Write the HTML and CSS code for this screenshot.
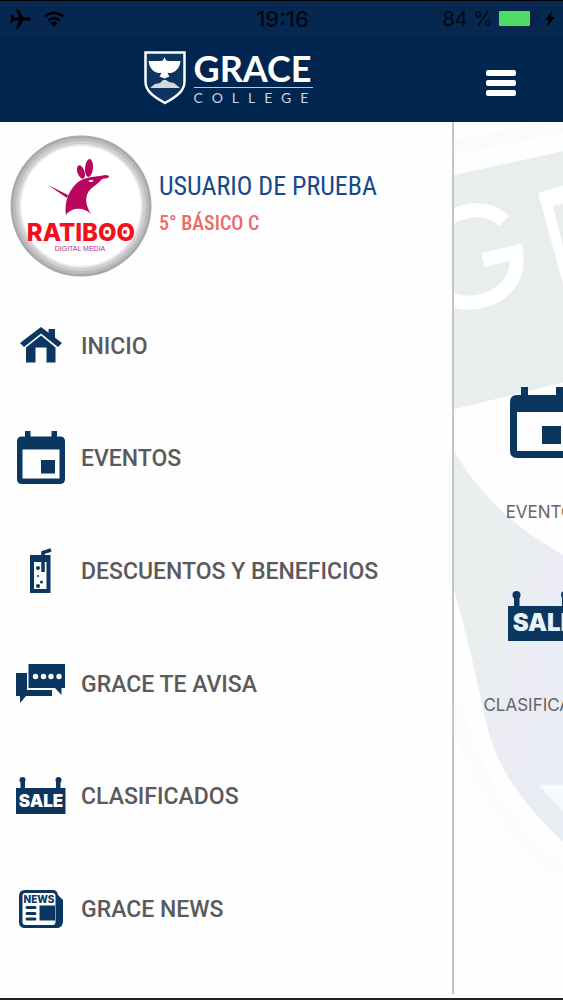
FILE: index.html
```html
<!DOCTYPE html>
<html lang="es">
<head>
    <meta charset="UTF-8">
    <meta name="viewport" content="width=device-width, initial-scale=1.0">
    <title>Grace College</title>
    <link rel="stylesheet" href="styles.css">
</head>
<body>
    <header class="header">
        <div class="status-bar">
            <div class="status-left">
                <svg width="22" height="20" viewBox="0 0 22 20"><path d="M21 10c0-1-1-1.500-2-1.500h-5.500L8 0H6l3 8.500H4L2 6H0l1.500 4L0 14h2l2-2.500h5L6 20h2l5.500-8.500H19c1 0 2-.5 2-1.500z"/></svg>
                <svg width="20" height="16" viewBox="0 0 20 16"><g fill="none" stroke="#000" stroke-width="2.500"><path d="M1 5.500a13 13 0 0 1 18 0M4.500 9.500a8 8 0 0 1 11 0"/></g><path d="M6.500 12a5 5 0 0 1 7 0L10 16z"/></svg>
            </div>
            <time class="clock">19:16</time>
            <div class="status-right">
                <span>84 %</span>
                <svg width="40" height="17" viewBox="0 0 40 17"><rect x=".5" y=".5" width="36" height="16" rx="2" fill="#0a2244"/><rect y="1" width="31" height="15" rx="1" fill="#4fdc64"/><path d="M38 6v5q1.500-2.500 0-5z"/></svg>
                <svg width="10" height="16" viewBox="0 0 10 16"><path d="M7 0 0 9h4l-2 7 8-10H6z"/></svg>
            </div>
        </div>
        <div class="top-bar">
            <a class="brand" href="#">
                <svg width="42" height="54" viewBox="0 0 42 54">
                    <path d="M1.500 1.500h39V31C40.500 40 32 46 21 52 10 46 1.500 40 1.500 31z" fill="#0e355f" stroke="#fff" stroke-width="2.500"/>
                    <path d="M4.500 10h12q2 0 3-1.500l1-2.500 1 2.500q1 1.500 3 1.500h12q-1 9-8 11.500-3 1-5 0 1 3 2 4l-5 2-5-2q1-1 2-4-2 1-5 0-7-2.500-8-11.500z" fill="#fff"/>
                    <path d="M6 37l5-4 5-1 3-3h3l3 2 5 1 6 5z" fill="#d6d6dc"/>
                </svg>
                <span class="brand-text">
                    <span class="brand-name">GRACE</span>
                    <span class="brand-sub">COLLEGE</span>
                </span>
            </a>
            <button class="menu-btn" type="button" aria-label="Menú">
                <svg width="30" height="26" viewBox="0 0 30 26"><g fill="#fff"><rect width="30" height="6" rx="2"/><rect y="10" width="30" height="6" rx="2"/><rect y="20" width="30" height="6" rx="2"/></g></svg>
            </button>
        </div>
    </header>

    <div class="view">
        <aside class="drawer">
            <div class="profile">
                <svg class="avatar" width="142" height="142" viewBox="0 0 142 142">
                    <circle cx="71" cy="71" r="70.500" fill="#a9a9ab"/>
                    <circle cx="71" cy="71" r="68" fill="#bcbcbe"/>
                    <circle cx="71" cy="71" r="65" fill="#cfcfd1"/>
                    <circle cx="71" cy="71" r="62" fill="#e6e6e8"/>
                    <circle cx="71" cy="71" r="60" fill="#fff"/>
                    <g fill="#b8065f">
                        <path d="M56 80c-2-13 3-25 11-32 7-6 15-6 23-7l5-1q4 0 4 1.500t-4 2l-3 .5c-4 5-10 8-13 12-4 6-4 13 2 23-6-6-18-8-25 1z"/>
                        <ellipse cx="71" cy="37" rx="3.500" ry="7" transform="rotate(-20 71 37)"/>
                        <ellipse cx="79" cy="33" rx="4" ry="9" transform="rotate(5 79 33)"/>
                        <path d="M38 50l20 10-1 3z"/>
                    </g>
                    <ellipse cx="81" cy="46" rx="2.500" ry="1" fill="#fff"/>
                    <text class="avatar-name" x="71" y="106" text-anchor="middle">RATIBOO</text>
                    <circle cx="97" cy="97" r="2" fill="#f2101d"/>
                    <circle cx="115" cy="97" r="2" fill="#f2101d"/>
                    <text class="avatar-sub" x="70" y="116" text-anchor="middle">DIGITAL MEDIA</text>
                </svg>
                <div class="profile-info">
                    <h1>USUARIO DE PRUEBA</h1>
                    <p>5° BÁSICO C</p>
                </div>
            </div>

            <nav class="menu">
                <a class="menu-item" href="#">
                    <span class="menu-icon">
                        <svg width="42" height="36" viewBox="0 0 42 36"><path d="M28.500 2H35v12l-6.500-5z"/><path d="M21 0 0 16l4 4L21 6.500 38 20l4-4z"/><path d="M21 8.500 6 20.500V35.500h9.500V20.500h11V35.500H35.500V20.500z"/></svg>
                    </span>
                    INICIO
                </a>
                <a class="menu-item" href="#">
                    <span class="menu-icon">
                        <svg width="48" height="53" viewBox="0 0 48 53"><path fill-rule="evenodd" d="M8 0h5.500v5.500h21V0H40v5.500h3q5 0 5 5V48q0 5-5 5H5q-5 0-5-5V10.500q0-5 5-5h3zM5.500 18.500v29h37v-29z"/><path d="M24 29h14v13.500H24z"/></svg>
                    </span>
                    EVENTOS
                </a>
                <a class="menu-item" href="#">
                    <span class="menu-icon">
                        <svg width="22" height="45" viewBox="0 0 22 45"><path d="M0 7h20.500v38H0z"/><path d="M4 14h12.500v27H4z" fill="#fff"/><path d="M13 24V4.500l8-2.500" fill="none" stroke="#0b365f" stroke-width="3.500"/><circle cx="8" cy="20" r="2"/><circle cx="8" cy="28" r="1"/><circle cx="11.500" cy="34" r="1.500"/><circle cx="8" cy="38" r="2"/></svg>
                    </span>
                    DESCUENTOS Y BENEFICIOS
                </a>
                <a class="menu-item" href="#">
                    <span class="menu-icon">
                        <svg width="50" height="39" viewBox="0 0 50 39"><path d="M0 9h11v17h25v6H10l-6 7v-7H0z"/><path d="M12.500 0H49v24h-3.500v7L39 24H12.500z"/><g fill="#fff"><circle cx="19.500" cy="12.500" r="2.700"/><circle cx="27.500" cy="12.500" r="2.700"/><circle cx="35" cy="12.500" r="2.700"/><circle cx="43" cy="12.500" r="2.700"/></g></svg>
                    </span>
                    GRACE TE AVISA
                </a>
                <a class="menu-item" href="#">
                    <span class="menu-icon">
                        <svg width="50" height="37" viewBox="0 0 50 37"><path d="M0 11h49.500v26H0z"/><circle cx="6.500" cy="3" r="3"/><circle cx="42.500" cy="3" r="3"/><path d="M4.500 3H9v9H4.500zM40 3h4.500v9H40z"/><text class="sale-text" x="25" y="30" text-anchor="middle">SALE</text></svg>
                    </span>
                    CLASIFICADOS
                </a>
                <a class="menu-item" href="#">
                    <span class="menu-icon">
                        <svg width="44" height="38" viewBox="0 0 44 38"><path d="M6 0h28q4 0 5 5l5 5v22q-1 6-6 6H6q-6 0-6-6V6q0-6 6-6z"/><rect x="3.500" y="3" width="33" height="32" rx="3" fill="#fff"/><path d="M20.500 15.500H36v15H20.500z"/><path d="M8 17.500h8M8 23.500h8M8 29h8" stroke="#0b365f" stroke-width="3" stroke-linecap="round"/><text class="news-text" x="20" y="13" text-anchor="middle">NEWS</text></svg>
                    </span>
                    GRACE NEWS
                </a>
            </nav>
        </aside>

        <main class="page">
            <svg class="watermark" viewBox="0 0 110 875" preserveAspectRatio="xMinYMin slice">
                <defs>
                    <linearGradient id="shade" x1="0" y1="0" x2="1" y2="1">
                        <stop offset=".4" stop-color="#e9eeef"/>
                        <stop offset=".65" stop-color="#ebebf5"/>
                        <stop offset="1" stop-color="#e8eff4"/>
                    </linearGradient>
                </defs>
                <path d="M0 25 110 4" fill="none" stroke="#fcfafa" stroke-width="14"/>
                <path d="M0 53 110 29V260L0 287z" fill="#e8edee"/>
                <path d="M50 99C36 84 10 85-9 99-30 120-30 160-8 175 15 187 45 178 58 158 62 150 64 142 62 130L29 138" fill="none" stroke="#fff" stroke-width="14"/>
                <path d="M84 71 110 63V81L99 84 110 129V166z" fill="#fff"/>
                <path d="M0 329C30 378 65 408 110 433V720C85 697 50 660 36 614 28 585 23 550 0 467z" fill="url(#shade)"/>
                <path d="M84 662H110V690z" fill="#f7fafc"/>
                <path d="M0 580C20 660 55 710 110 750" fill="none" stroke="#fdfbfd" stroke-width="16"/>
            </svg>
            <a class="tile" href="#">
                <svg width="71" height="72" viewBox="0 0 71 72"><path fill-rule="evenodd" d="M11 0h7v8h28V0h7v8h11q7 0 7 7v49q0 7-7 7H7q-7 0-7-7V15q0-7 7-7h4zM7 25v39h57V25z"/><path d="M32 39h19v18H32z"/></svg>
                <span>EVENTOS</span>
            </a>
            <a class="tile" href="#">
                <svg width="74" height="50" viewBox="0 0 74 50"><path d="M0 15h74v35H0z"/><circle cx="8.500" cy="4" r="4"/><circle cx="57" cy="4" r="4"/><path d="M6 4h5.500v11H6zM54 4h6v11h-6z"/><text class="sale-text-lg" x="36" y="40" text-anchor="middle">SALE</text></svg>
                <span>CLASIFICADOS</span>
            </a>
        </main>
    </div>
</body>
</html>
```

FILE: styles.css
```css
* {
    margin: 0;
    padding: 0;
    box-sizing: border-box;
}

body {
    font-family: Roboto, "Liberation Sans", sans-serif;
    background-color: #fefefe;
    min-height: 100vh;
    display: flex;
    flex-direction: column;
    border-top: 1px solid #000;
    border-bottom: 2px solid #222;
}

a {
    color: inherit;
    text-decoration: none;
}

svg {
    display: block;
    flex-shrink: 0;
}

/* header */
.header {
    background-color: #00264f;
}

.status-bar {
    display: grid;
    grid-template-columns: 1fr auto 1fr;
    align-items: center;
    height: 35px;
    padding: 0 8px 0 10px;
    background-color: #06274f;
    color: #000814;
    font-family: Inter, "Liberation Sans", sans-serif;
    font-size: 20px;
}

.status-left,
.status-right {
    display: flex;
    align-items: center;
    gap: 12px;
}

.status-right {
    justify-content: flex-end;
    gap: 6px;
}

.clock {
    font-size: 22px;
    font-weight: 500;
}

.top-bar {
    display: flex;
    align-items: center;
    height: 86px;
}

.brand {
    display: flex;
    justify-content: center;
    gap: 8px;
    width: 81%;
    color: #fff;
    font-family: Lato, sans-serif;
}

.brand-text {
    width: 119px;
}

.brand-name {
    display: block;
    height: 37px;
    font-size: 36px;
    font-weight: 700;
    line-height: 34px;
    border-bottom: 1px solid #b9c7d8;
}

.brand-sub {
    display: block;
    color: #c5d3e2;
    font-size: 14px;
    font-weight: 400;
    letter-spacing: 9px;
    line-height: 20px;
    white-space: nowrap;
}

.menu-btn {
    margin: 8px 0 0 30px;
    border: none;
    background: none;
    cursor: pointer;
}

/* drawer and the page behind it */
.view {
    flex: 1;
    display: flex;
}

.drawer {
    flex: 0 0 80.7%;
    display: flex;
    flex-direction: column;
    margin-bottom: 4px;
    padding-bottom: 28px;
    border-right: 2px solid #c5c4c8;
}

.profile {
    display: flex;
    align-items: center;
    gap: 7px;
    padding: 13px 10px;
}

.profile-info {
    padding-bottom: 4px;
}

.profile-info h1 {
    color: #17498a;
    font-family: "Roboto Condensed", "Liberation Sans Narrow", "Open Sans Condensed", sans-serif;
    font-size: 26px;
    font-weight: 400;
    line-height: 38px;
    white-space: nowrap;
}

.profile-info p {
    color: #f0686a;
    font-family: "Roboto Condensed", "Liberation Sans Narrow", sans-serif;
    font-size: 20px;
    font-weight: 500;
    line-height: 36px;
}

.avatar-name {
    fill: #f2101d;
    font-family: Inter, sans-serif;
    font-size: 24px;
    font-weight: 800;
}

.avatar-sub {
    fill: #b0307c;
    font-family: "Liberation Sans", sans-serif;
    font-size: 7px;
}

.menu {
    flex: 1;
    display: grid;
    grid-auto-rows: 1fr;
}

.menu-item {
    display: flex;
    align-items: center;
    gap: 15px;
    padding-left: 16px;
    color: #5c595b;
    font-size: 23px;
    font-weight: 500;
}

.menu-icon {
    display: flex;
    justify-content: center;
    width: 50px;
    padding-bottom: 2px;
    fill: #0b365f;
}

.sale-text,
.sale-text-lg,
.news-text {
    font-family: Inter, "Liberation Sans", sans-serif;
    font-weight: 900;
}

.sale-text {
    fill: #fff;
    font-size: 17px;
}

.sale-text-lg {
    fill: #e8f2fb;
    font-size: 24px;
}

.news-text {
    fill: #0b365f;
    font-size: 10px;
    font-weight: 800;
}

.page {
    position: relative;
    flex: 1;
    min-width: 0;
    overflow: hidden;
    padding-top: 265px;
}

.watermark {
    position: absolute;
    inset: 0;
    width: 100%;
    height: 100%;
}

.tile {
    position: relative;
    display: flex;
    flex-direction: column;
    align-items: center;
    gap: 43px;
    width: 182px;
    margin-bottom: 69px;
    color: #666;
    fill: #0b365f;
    font-family: Inter, "Liberation Sans", sans-serif;
    font-size: 17px;
    line-height: 20px;
}

.tile + .tile {
    gap: 54px;
}
```
